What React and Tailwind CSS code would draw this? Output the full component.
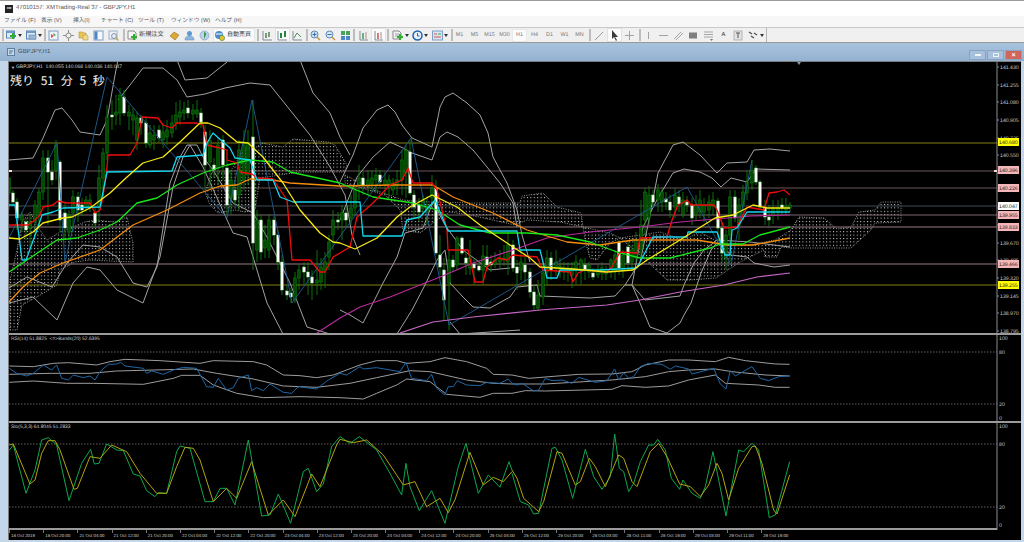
import React from "react";

const SANS = "font-['Liberation_Sans','Noto_Sans_CJK_JP',sans-serif] [text-rendering:geometricPrecision]";

/* ---------- toolbar icons ---------- */
const Svg = ({ w = 11, children, className = "" }) => (
  <svg width={w} height={11} viewBox={`0 0 ${w} 11`} className={"shrink-0 " + className}>{children}</svg>
);
const Plus = ({ x = 6, y = 6 }) => (
  <path d={`M${x} ${y - 3}h2v2h2v2h-2v2h-2v-2h-2v-2h2z`} transform={`translate(-1 0)`} fill="#2fae2f" />
);
const Arrow = () => <svg width="4" height="3" viewBox="0 0 4 3" className="shrink-0"><path d="M0 0h4L2 3z" fill="#333" /></svg>;
const NewChart = () => <Svg><rect x="0.5" y="1" width="8" height="7" fill="#dfeaf6" stroke="#5b86b4" /><rect x="1" y="1" width="7" height="2" fill="#6f9bc9" /><Plus x={7} y={6} /></Svg>;
const Profile = () => <Svg><rect x="0.5" y="1" width="9" height="8" fill="#dfeaf6" stroke="#5b86b4" /><rect x="1" y="1" width="8" height="2" fill="#6f9bc9" /><rect x="3" y="5" width="7" height="4" fill="#9db8d6" stroke="#5b86b4" strokeWidth="0.6" /></Svg>;
const WinGreen = () => <Svg><rect x="1" y="1" width="9" height="9" fill="#eef3f9" stroke="#7d9fc4" /><path d="M3 4l3 2-3 2z" fill="#d9504a" /><path d="M5 3l3 2-2 1z" fill="#3fa83f" /></Svg>;
const Move = () => <Svg><circle cx="5.5" cy="5.5" r="2.5" fill="none" stroke="#8a8a8a" /><path d="M5.5 0v3M5.5 8v3M0 5.5h3M8 5.5h3" stroke="#8a8a8a" /></Svg>;
const Folder = () => <Svg><path d="M1 2h4l1 1h2v5H1z" fill="#e8c45a" stroke="#b9973a" strokeWidth="0.6" /><path d="M5 5h4l1 1v4H5z" fill="#f2d98a" stroke="#b9973a" strokeWidth="0.6" /></Svg>;
const Win = () => <Svg><rect x="1" y="1" width="9" height="9" fill="#f5f8fc" stroke="#7d9fc4" /><rect x="1.5" y="1.5" width="3" height="8" fill="#4f86c0" /></Svg>;
const Search = () => <Svg><rect x="1" y="1" width="8" height="8" fill="#eef2f7" stroke="#9ab0c8" /><circle cx="6" cy="6" r="2.4" fill="none" stroke="#7f8fa0" /><path d="M8 8l2.5 2.5" stroke="#c8a43c" strokeWidth="1.2" /></Svg>;
const Order = () => <Svg><path d="M1 1h6l2 2v6H1z" fill="#f7f7f7" stroke="#8a8a8a" /><Plus x={7} y={7} /></Svg>;
const Diamond = () => <Svg><path d="M1 6l4-4 5 3-4 5z" fill="#d9a93a" stroke="#9c7420" strokeWidth="0.6" /></Svg>;
const Person = () => <Svg><circle cx="5.5" cy="3.5" r="2.5" fill="#5d9ad6" /><path d="M1 10q0-4 4.5-4T10 10z" fill="#8db7e0" stroke="#5c86b0" strokeWidth="0.5" /></Svg>;
const Globe = () => <Svg><circle cx="5.5" cy="5.5" r="4.5" fill="#b9d3ea" stroke="#7f9ab5" strokeWidth="0.6" /><path d="M5 2q3 1 2 3t-2 4" fill="#3f9a55" /></Svg>;
const Auto = () => <Svg><circle cx="5" cy="5" r="4" fill="#4b8fc9" /><path d="M2 4h6" stroke="#fff" /><circle cx="8" cy="8" r="2.6" fill="#e8c22e" stroke="#3e8a3e" strokeWidth="0.6" /></Svg>;
const Bars = ({ c = "#3f6f3f" }) => <Svg><path d="M1 1v9h9" fill="none" stroke="#7d8a99" /><path d="M4 3v5M7 2v5" stroke={c} strokeWidth="1.3" /></Svg>;
const Candle = () => <Svg><path d="M1 1v9h9" fill="none" stroke="#7d8a99" /><rect x="3" y="3" width="2" height="5" fill="#1f8a3c" /><rect x="7" y="1" width="2" height="6" fill="#1f8a3c" /></Svg>;
const LineCh = () => <Svg><path d="M1 1v9h9" fill="none" stroke="#7d8a99" /><path d="M2 8l3-5 4 4" fill="none" stroke="#4f8a6a" /></Svg>;
const ZoomI = ({ plus }) => <Svg><circle cx="4.5" cy="4.5" r="3.5" fill="#d6e6f6" stroke="#5b86b4" /><path d="M7 7l3 3" stroke="#c49a30" strokeWidth="1.5" /><path d={plus ? "M2.5 4.5h4M4.5 2.5v4" : "M2.5 4.5h4"} stroke="#3d6fa3" /></Svg>;
const Grid4 = () => <Svg w={10}><path d="M0 1h4v4H0zM5 1h4v4H5z" fill="#45a35a" /><path d="M0 6h4v4H0zM5 6h4v4H5z" fill="#4b86c6" /></Svg>;
const Shift = ({ c }) => <Svg><path d="M2 1v9h8" fill="none" stroke="#7d8a99" /><path d="M5 3v6" stroke={c} strokeWidth="1.5" /><path d="M8 2v7" stroke="#b08a8a" /></Svg>;
const Indic = () => <Svg w={12}><path d="M1 1h6l2 2v6H1z" fill="#f2f2f2" stroke="#8a8a8a" /><path d="M3 4h4M3 6h4" stroke="#9aa" /><Plus x={8} y={7} /></Svg>;
const Clock = () => <Svg><circle cx="5.5" cy="5.5" r="4.5" fill="#e8f0f9" stroke="#1f62ad" strokeWidth="1.5" /><path d="M5.5 3v3h2" stroke="#1f62ad" fill="none" /></Svg>;
const Tpl = () => <Svg><rect x="0.5" y="1" width="10" height="9" fill="#d7e4f3" stroke="#7d9fc4" /><path d="M2 4h3M2 7h7" stroke="#cf5a4f" /><path d="M6 4h3" stroke="#45a35a" /></Svg>;
const Gray = ({ d, sw = 1 }) => <Svg><path d={d} fill="none" stroke="#a2a2a2" strokeWidth={sw} /></Svg>;
const Cursor = () => <Svg><path d="M3 0v9l2-2 2 4 1-1-2-3h3z" fill="#3a3a3a" /></Svg>;
const Rect = () => <Svg><rect x="1" y="2.5" width="8" height="6" fill="#7f7f7f" /></Svg>;
const Fibo = () => <Svg><path d="M1 2h9M1 4.5h9M1 7h9" stroke="#a5a5a5" /><path d="M7 9h3l-1.500 2z" fill="#777" /></Svg>;
const TextLbl = () => <Svg><rect x="1" y="1" width="8" height="9" fill="#e2e2e2" stroke="#b5b5b5" /><path d="M3 3h4M5 3v5" stroke="#555" /></Svg>;
const Tools = () => <Svg><path d="M1 2l3 2M3 6l3 2M6 3l3 2" stroke="#555" strokeWidth="1.5" /></Svg>;
const Pen = () => <Svg><path d="M1 10L9 2" stroke="#9a9a9a" /></Svg>;
const Sep = ({ ml = 0, mr = 0 }) => <div style={{ marginLeft: ml, marginRight: mr }} className="w-[2px] h-[12px] bg-[#bdbdbd] shrink-0" />;
const Btn = ({ children, active, w = 15 }) => (
  <div style={{ width: w }} className={"h-[14px] flex items-center justify-center gap-[1px] shrink-0 " + (active ? "bg-[#fbfbfb] border border-[#e2e2e2]" : "")}>{children}</div>
);

const Toolbar = () => (
  <div className={"h-[15px] bg-[#f0f0f0] flex items-center pl-[2px] border-b border-[#9a9a9a] " + SANS}>
    <Sep />
    <Btn w={20}><NewChart /><Arrow /></Btn>
    <Btn w={20}><Profile /><Arrow /></Btn>
    <Sep />
    <Btn><WinGreen /></Btn><Btn><Move /></Btn><Btn><Folder /></Btn><Btn><Win /></Btn><Btn><Search /></Btn>
    <Sep ml={2} mr={1} />
    <div className="w-[41px] pl-[1px] flex items-center gap-[1px] text-[6.2px] text-[#444] whitespace-nowrap shrink-0"><Order /><span>新規注文</span></div>
    <Btn><Diamond /></Btn><Btn><Person /></Btn><Btn><Globe /></Btn>
    <div className="w-[42px] h-[14px] ml-[1px] bg-[#fbfbfb] border border-[#e6e6e6] flex items-center gap-[2px] text-[6px] text-[#333] whitespace-nowrap shrink-0"><Auto /><span>自動売買</span></div>
    <Sep ml={2} mr={1} />
    <Btn><Bars /></Btn><Btn active><Candle /></Btn><Btn><LineCh /></Btn>
    <Sep ml={1} />
    <Btn><ZoomI plus /></Btn><Btn><ZoomI /></Btn><Btn><Grid4 /></Btn>
    <Sep mr={1} />
    <Btn><Shift c="#3f9a55" /></Btn><Btn active><Shift c="#c0504d" /></Btn>
    <Sep ml={1} mr={1} />
    <Btn w={20}><Indic /><Arrow /></Btn>
    <Btn w={20}><Clock /><Arrow /></Btn>
    <Btn w={20}><Tpl /><Arrow /></Btn>
    <Sep ml={1} />
    <div className="flex text-[5.4px] text-[#777] -ml-[1px] shrink-0">
      {["M1", "M5", "M15", "M30", "H1", "H4", "D1", "W1", "MN"].map((t) => (
        <div key={t} className={"w-[15px] h-[13px] flex items-center justify-center " + (t === "H1" ? "bg-[#fbfbfb] border border-[#e8e8e8]" : "")}>{t}</div>
      ))}
    </div>
    <Sep ml={2} mr={1} />
    <Btn><Pen /></Btn><Btn active><Cursor /></Btn><Btn><Gray d="M5.5 1v9M1 5.500h9" /></Btn>
    <Sep ml={2} />
    <Btn><Gray d="M5.500 2v7" /></Btn><Btn><Gray d="M1 5.500h9" /></Btn><Btn><Gray d="M1 9L8 2M3 10l7-7" /></Btn>
    <Btn><Rect /></Btn><Btn><Fibo /></Btn>
    <Btn><span className="text-[6px] text-[#666] font-bold">A</span></Btn>
    <Btn><TextLbl /></Btn>
    <Btn w={20}><Tools /><Arrow /></Btn>
    <div className="w-[1px] h-[14px] bg-[#b5b5b5]" />
  </div>
);

/* ---------- chart data (screen coordinates) ---------- */
const WHITE_LINES = [
  "9,160 33,158 43,138 55,110 62,108 72,120 80,132 100,135 107,120 115,75 118,60",
  "118,100 130,85 143,68 163,68 177,80 187,97 205,94 225,88 250,83 270,85 290,110 310,135 330,167 345,195 352,235 360,255",
  "177,60 185,80 207,78 227,62",
  "300,60 313,93 330,113 340,137 350,155",
  "340,182 353,155 363,128 377,110 388,105 395,112 402,125 412,138 432,147 440,107 445,97 453,93 467,103 480,115 488,133 493,157 507,183 517,210 522,235 530,262",
  "340,220 357,177 373,157 390,142 403,148 412,153 432,160 440,137 447,132 458,137 473,150 487,167 500,183 513,203 517,227",
  "9,288 27,277 52,287 67,263 83,245 100,247 117,257 133,283 147,287 157,267 170,183 180,157 187,145 197,145 203,157 213,170 233,203 253,213 267,237 290,283 307,327 330,334",
  "9,303 33,297 57,320 73,283 87,267 100,270 117,290 143,303 160,257 173,187 183,157 190,145 203,167 233,233 247,237 257,270 267,303 283,334",
  "340,310 350,315 363,323 373,303 383,283 397,257 405,233 423,228 433,202 445,225 463,250 490,270 510,268",
  "397,334 412,310 425,285 437,260 445,250 450,283 463,297 473,307 490,308 510,297 517,287 537,285 540,296 590,298 615,296 625,285 632,285 645,300 680,296 684,285 694,263 704,250 717,240 750,242 790,247",
  "450,322 460,334 520,330",
  "625,285 640,262 648,225 658,173 673,145 683,142 700,155 717,173 727,163 747,162 754,150 770,149 790,151",
  "632,285 643,227 658,198 673,173 684,169 700,172 712,178 721,187 731,178 747,182 756,169 790,170",
  "632,285 640,303 650,327 667,333 680,323 684,315 691,303 701,273 711,250 717,243 731,255 747,257 754,263 774,267 790,265",
];
const ZIGZAG = "9,238 57,143 65,263 107,77 227,218 252,100 292,303 411,138 449,325 687,187 731,265 752,160";
const RED = "9,225 28,225 35,220 40,215 43,207 53,205 58,201 67,203 90,203 95,213 100,210 103,197 107,167 108,155 130,155 137,143 142,117 158,118 163,125 172,128 177,123 197,123 203,125 207,145 220,148 227,150 227,160 237,163 240,172 252,174 257,178 273,179 287,200 292,260 310,260 320,272 325,272 333,257 340,253 350,247 357,217 373,203 390,185 402,180 408,168 413,183 432,183 437,190 447,230 448,250 468,250 475,282 483,282 487,267 498,258 507,260 513,255 537,257 543,270 570,272 573,282 578,273 585,270 607,272 612,267 620,252 637,253 640,238 667,237 672,220 678,205 684,202 687,200 691,205 714,205 717,210 724,228 737,227 747,207 764,210 769,193 777,192 784,190 790,195";
const CYAN = "9,205 15,205 22,260 26,260 37,230 42,215 53,212 63,208 100,207 107,172 172,171 177,157 203,155 207,143 213,133 223,142 230,148 235,158 250,160 257,180 273,180 280,197 293,202 360,202 363,236 402,236 407,220 420,217 435,200 448,231 517,231 520,250 540,250 547,278 557,278 560,270 600,270 637,268 653,237 687,237 688,232 717,232 725,255 730,255 732,230 737,228 747,212 790,212";
const YELLOW = "9,238 20,239 33,232 43,223 63,218 72,217 90,208 110,193 127,177 143,163 163,157 180,142 200,123 208,123 220,128 237,142 248,143 263,157 283,183 300,210 320,233 333,242 340,243 355,249 377,238 397,217 410,207 432,195 457,207 480,225 507,243 530,258 540,267 573,269 607,272 633,270 647,260 680,240 715,218 733,215 753,205 767,208 790,208";
const GREEN = "9,272 27,260 57,240 77,238 100,230 117,222 137,203 157,198 177,185 203,173 227,165 250,160 273,162 290,172 313,177 340,183 373,197 413,203 437,210 460,225 490,233 527,233 557,235 590,242 617,252 640,258 670,258 710,248 720,244 743,244 760,235 790,227";
const ORANGE = "9,302 23,287 40,273 63,263 100,250 133,225 167,210 200,193 220,186 237,185 250,179 273,180 290,183 340,186 393,185 433,185 453,197 493,213 527,230 567,242 600,245 633,240 680,240 697,240 727,245 753,245 790,238";
const MAG1 = "317,333 340,318 360,307 390,297 440,277 473,263 513,250 547,238 590,232 640,227 680,222 751,216 790,215";
const MAG2 = "400,333 433,322 473,317 540,310 607,305 640,300 680,292 724,285 757,277 790,273";
const CLOUDS = [
  "10,330 17,330 22,305 37,297 57,285 60,270 75,262 90,260 133,262 133,243 127,217 115,222 95,220 85,222 60,232 47,240 40,230 30,212 22,222 17,250 10,280",
  "210,205 218,213 235,210 245,212 255,210 260,178 300,172 345,172 347,165 335,145 328,142 293,139 283,147 262,143 255,148 245,148 230,172 212,172 205,192",
  "345,175 375,190 403,200 430,202 473,203 520,203 522,196 543,193 557,207 581,213 585,240 590,258 597,260 610,243 620,238 610,233 560,222 527,220 515,225 470,215 450,212 437,220 420,233 403,230 400,210 385,195 345,183",
  "620,238 640,235 660,232 684,240 700,232 724,245 750,245 775,240 791,230 799,217 824,218 837,229 851,227 859,212 875,210 881,202 901,202 901,222 875,223 871,230 851,248 791,248 781,247 777,257 765,257 764,250 740,262 716,278 690,280 667,280 653,267 640,255",
];
/* x, bodyTop, bodyBottom, wickTop, wickBottom, white */
const CANDLES = [
  [9,178,193,178,210,0],[13,193,202,190,205,1],[17,202,218,198,230,1],[22,216,220,212,232,0],[26,222,230,218,240,1],[30,222,228,214,248,0],[35,205,222,200,235,0],[39,192,213,188,225,0],[43,158,192,150,200,0],[48,158,172,150,225,1],[52,172,180,160,185,1],[56,145,170,140,180,0],[60,162,220,160,232,1],[65,213,228,203,238,1],[69,215,232,210,240,0],[73,197,213,190,232,0],[78,197,210,192,222,1],[82,205,210,198,216,1],[86,200,206,196,212,0],[90,200,207,194,212,0],[95,213,223,208,228,1],[99,178,207,165,222,0],[103,153,178,148,190,0],[107,117,153,105,160,0],[112,115,117,100,130,1],[116,112,115,95,125,0],[120,95,113,88,125,0],[124,97,113,90,116,1],[129,112,116,105,130,0],[133,115,120,108,135,0],[137,118,140,112,150,0],[141,118,123,115,135,1],[146,123,143,118,148,1],[150,133,145,125,148,0],[154,135,140,125,150,0],[159,130,138,125,142,1],[163,132,140,125,148,0],[167,130,137,120,145,0],[172,123,133,115,138,0],[176,115,123,102,130,0],[180,112,117,100,125,0],[184,110,113,102,120,0],[188,108,113,100,118,1],[193,110,114,104,120,0],[197,110,114,100,118,0],[201,113,122,108,128,1],[205,132,165,125,190,1],[210,140,162,130,190,0],[214,165,170,158,178,1],[218,145,168,138,185,0],[223,140,165,135,180,1],[227,168,205,160,215,1],[231,180,198,170,215,0],[235,190,200,180,205,1],[239,150,195,140,210,0],[244,145,180,130,190,0],[248,143,175,130,185,0],[253,137,243,100,270,1],[257,220,250,210,262,0],[261,220,252,214,260,1],[265,240,248,225,258,0],[269,220,250,214,258,0],[274,220,235,216,245,1],[278,235,262,230,270,1],[282,262,290,255,295,1],[287,291,295,285,300,1],[291,293,297,288,303,1],[295,278,300,272,303,0],[299,270,278,264,290,0],[304,267,272,262,285,1],[308,272,277,262,295,1],[312,277,283,270,300,1],[317,280,283,250,295,0],[321,267,282,258,290,0],[325,262,270,252,288,0],[329,242,257,235,270,0],[333,220,235,210,250,0],[338,220,222,212,230,1],[342,213,220,205,240,0],[346,213,220,205,228,1],[351,208,218,195,225,0],[355,190,208,185,215,0],[359,178,185,165,200,0],[363,178,185,172,195,1],[368,180,186,170,195,0],[372,178,184,170,192,0],[376,175,180,168,192,0],[380,175,182,170,188,1],[385,180,185,172,195,0],[389,180,187,175,198,0],[393,183,190,178,195,0],[397,180,186,170,195,0],[402,160,180,150,195,0],[406,150,173,145,198,0],[410,152,193,140,195,1],[414,195,207,190,218,1],[419,205,212,198,222,1],[423,200,208,195,215,0],[427,205,212,196,225,0],[432,188,198,175,205,0],[436,188,253,180,255,1],[440,255,267,235,275,1],[444,270,300,258,320,1],[449,260,283,250,330,0],[453,260,267,255,272,1],[457,238,265,236,270,0],[462,238,253,236,255,1],[466,258,263,252,275,1],[470,258,268,240,275,0],[474,264,268,258,285,1],[479,266,270,260,272,1],[483,256,270,245,285,0],[487,257,265,245,270,1],[491,262,265,255,272,1],[495,260,264,252,268,0],[500,258,262,250,268,0],[504,258,260,245,266,0],[508,245,262,232,275,0],[513,245,268,240,272,1],[517,267,273,260,290,1],[521,262,270,250,280,0],[525,265,272,255,285,1],[530,272,292,268,298,1],[534,292,305,285,310,1],[538,295,308,280,311,0],[543,273,297,262,305,0],[547,258,272,250,285,0],[551,258,270,252,280,1],[556,262,268,250,276,0],[560,266,272,258,278,0],[564,268,272,262,280,0],[568,268,272,262,282,0],[572,268,275,262,288,0],[576,262,270,255,284,0],[581,260,270,258,285,0],[585,265,270,258,280,1],[589,265,272,262,278,0],[593,273,277,268,280,1],[598,270,275,265,278,0],[602,268,273,262,280,0],[606,270,274,266,280,0],[611,260,272,258,278,0],[615,255,272,250,280,0],[619,242,268,240,275,1],[623,255,270,250,278,0],[628,247,263,240,270,1],[632,250,262,245,270,0],[636,240,258,232,262,0],[641,225,250,200,258,0],[645,192,220,188,235,0],[649,195,218,186,225,0],[653,195,202,190,208,1],[658,190,200,184,212,0],[662,192,202,187,212,0],[666,199,202,192,210,1],[670,202,210,195,218,1],[675,195,207,188,218,0],[679,197,204,190,212,1],[683,200,215,192,218,0],[687,202,205,196,212,1],[692,205,218,198,225,1],[696,205,215,195,220,0],[700,200,212,190,218,0],[704,205,212,198,222,0],[709,202,210,195,218,0],[713,200,205,192,215,0],[718,201,228,198,245,1],[722,228,253,222,262,1],[726,235,258,230,270,0],[730,197,235,190,262,0],[735,197,218,190,222,1],[739,205,225,198,240,0],[743,192,205,185,220,0],[747,182,193,170,200,0],[752,170,183,160,190,0],[756,168,182,165,185,1],[760,182,207,180,210,1],[765,207,217,200,225,1],[769,217,220,205,226,1],[773,208,215,200,224,0],[778,208,212,200,220,0],[782,205,208,198,216,1],[786,206,210,198,214,0],[790,205,208,202,212,0],
];
const HLINES = [[143,"#808010"],[171,"#6a5558"],[188,"#6a5558"],[206,"#3f4a52"],[215,"#7c666c"],[227,"#957c80"],[264,"#957c80"],[285,"#808010"]];
const PRICES = [["141.430",67],["141.255",85],["141.080",102],["140.905",120],["140.725",138],["140.550",155],["",173],["",191],["140.025",208],["139.845",225],["139.670",243],["139.495",260],["139.320",278],["139.145",296],["138.970",313],["138.795",331]];
const BOXES = [["140.680",142,"#ffff00"],["140.396",170,"#f4b6b8"],["140.226",188,"#f4b6b8"],["140.047",206,"#ffffff"],["139.955",215,"#f4b6b8"],["139.833",227,"#f4b6b8"],["139.466",264,"#f4b6b8"],["139.255",285,"#ffff00"]];

const P = ({ pts, c, w = 1 }) => <polyline points={pts} fill="none" stroke={c} strokeWidth={w} strokeLinejoin="round" />;
const FONT = "'Liberation Sans',sans-serif";

const MainPane = () => (
  <div className="relative h-[273px] border-b-2 border-[#9a9a9a]">
    <svg width="1012" height="271" viewBox="9 62 1012 271" className="block">
      <defs>
        <pattern id="dots" patternUnits="userSpaceOnUse" width="3.4" height="3.4">
          <rect width="1" height="1" fill="#dcdcdc" />
        </pattern>
        <clipPath id="plot"><rect x="9" y="62" width="988" height="271" /></clipPath>
      </defs>
      <g clipPath="url(#plot)">
        {CLOUDS.map((c, i) => <polygon key={i} points={c} fill="url(#dots)" stroke="#bbb" strokeWidth="0.8" strokeDasharray="1 1.400" />)}
        {HLINES.map(([y, c]) => <line key={y} x1="9" x2="997" y1={y} y2={y} stroke={c} strokeWidth="1.200" />)}
        {WHITE_LINES.map((l, i) => <P key={i} pts={l} c="#a2a2a2" w={1} />)}
        {CANDLES.map(([x, t, b, wt, wb, white], i) => (
          <g key={i}>
            <line x1={x} x2={x} y1={wt} y2={wb} stroke="#0b7d0b" strokeWidth="0.9" />
            <rect x={x - 1.300} y={t} width="2.600" height={Math.max(b - t, 1)} fill={white ? "#ffffff" : "#044a04"} stroke={white ? "#7fcf7f" : "#0d8a0d"} strokeWidth="0.5" />
          </g>
        ))}
        <P pts={ZIGZAG} c="#1f5f93" w={0.9} />
        <P pts={MAG1} c="#b92a9c" w={1.200} />
        <P pts={MAG2} c="#c869c8" w={1.200} />
        <P pts={ORANGE} c="#f48c0c" w={1.300} />
        <P pts={GREEN} c="#18e818" w={1.300} />
        <P pts={RED} c="#f00c0c" w={1.300} />
        <P pts={CYAN} c="#14d6ee" w={1.300} />
        <P pts={YELLOW} c="#f8ea12" w={1.300} />
      </g>
      <rect x="9" y="170" width="3" height="2" fill="#f6dede" />
      <path d="M797 62h4l-2 3z" fill="#7f97a8" />
      <line x1="997" x2="997" y1="62" y2="333" stroke="#8c8c8c" />
      <g fontFamily={FONT} fontSize="5.2" fill="#c9c9c9" textRendering="geometricPrecision">
        {PRICES.map(([t, y]) => (
          <g key={y}>
            <line x1="997" x2="999" y1={y} y2={y} stroke="#8c8c8c" />
            {t && <text x="1000" y={y + 1.800}>{t}</text>}
          </g>
        ))}
      </g>
      <rect x="994" y="170" width="3" height="2" fill="#f6dede" />
      <g fontFamily={FONT} fontSize="5.2" fill="#222" textRendering="geometricPrecision">
        {BOXES.map(([t, y, c]) => (
          <g key={t}>
            <rect x="998" y={y - 4} width="21" height="8" fill={c} />
            <text x="999" y={y + 1.800}>{t}</text>
          </g>
        ))}
      </g>
    </svg>
    <div className={"absolute left-[2px] top-[2px] flex items-center gap-[1px] text-[5px] text-[#d0d0d0] whitespace-nowrap " + SANS}>
      <span className="text-[4px]">▼</span><span>GBPJPY,H1&nbsp; 140.055 140.068 140.036 140.047</span>
    </div>
    <div className="absolute left-[1px] top-[11px] text-[12px] leading-[16px] text-[#f2f2f2] whitespace-nowrap font-['Noto_Sans_CJK_JP',sans-serif] [word-spacing:4px]">残り 51 分 5 秒</div>
  </div>
);

const gz7 = "translate(0 330) scale(0.3333)";
const gz8 = "translate(512 330) scale(0.3333)";
const RSI = {
  upper: ["28,108 100,110 160,100 205,98 290,105 330,95 375,88 480,92 600,100 640,92 760,95 800,105 850,135 900,137 950,143 1000,135 1080,105 1130,92 1190,92 1220,100 1290,95 1335,83 1400,95 1460,115 1480,133 1536,135", "0,135 50,145 200,133 300,132 360,125 400,105 470,90 530,90 610,95 650,82 700,92 790,102 833,103"],
  mid: ["28,133 150,130 270,130 350,123 580,117 650,130 760,147 850,168 950,172 1050,160 1130,143 1230,122 1290,125 1400,150 1480,160 1536,162", "0,162 100,162 300,150 400,140 470,125 530,120 610,117 660,125 760,135 833,138"],
  lower: ["28,157 100,153 200,160 280,160 430,163 520,145 545,136 600,136 640,165 710,190 790,203 900,200 1020,203 1090,207 1130,190 1190,165 1220,147 1290,155 1340,193 1440,202 1480,190 1536,190", "0,190 40,182 100,183 300,178 330,167 400,172 470,168 530,150 610,135 640,160 740,165 790,172 833,172"],
  blue: ["28,115 50,130 80,138 100,130 130,105 155,120 170,105 185,145 205,150 220,135 250,143 270,138 285,150 300,125 325,103 350,102 362,97 375,108 430,115 440,130 455,123 490,133 520,120 550,112 590,115 620,170 640,172 655,145 680,180 700,173 715,145 745,135 755,182 770,173 790,182 810,162 850,187 875,190 895,170 950,177 985,150 1020,130 1040,135 1080,110 1090,117 1130,113 1200,125 1218,97 1235,145 1280,152 1295,133 1310,175 1335,195 1345,170 1360,170 1372,152 1400,165 1440,167 1460,157 1500,160 1525,147 1536,160", "0,160 15,165 30,160 65,183 80,180 100,145 120,152 150,150 180,160 200,142 250,157 285,152 308,117 320,150 335,128 350,145 365,140 385,110 410,100 450,103 475,118 490,108 530,117 540,132 605,115 625,162 642,177 655,122 670,138 720,110 745,145 770,152 800,140 833,138"],
};
const STO = {
  g: ["28,360 40,345 78,490 105,420 125,330 145,323 170,345 207,512 245,400 272,358 283,402 297,400 320,342 350,360 370,362 400,432 420,438 440,482 465,500 475,488 500,490 530,365 540,348 570,355 615,515 640,515 660,475 680,475 705,525 745,330 785,558 810,555 835,492 872,580 910,425 925,415 950,485 970,462 995,350 1020,320 1050,340 1078,320 1130,360 1170,430 1205,495 1218,400 1230,470 1258,542 1295,482 1335,580 1375,410 1398,340 1435,490 1465,435 1500,472 1527,395 1536,420", "0,430 25,515 50,525 65,552 80,550 120,355 130,352 150,390 182,505 220,358 245,440 270,478 295,440 308,312 322,415 335,425 350,485 365,460 385,395 410,345 425,345 437,328 460,360 478,445 503,478 513,450 540,490 565,505 580,470 603,365 642,558 680,360 695,365 720,340 740,360 772,563 790,555 833,395"],
  y: ["28,345 40,342 60,390 90,462 105,450 125,370 145,332 165,332 180,360 222,478 232,475 270,380 300,385 335,345 380,365 420,430 470,490 500,490 530,410 555,352 580,355 600,390 640,515 680,475 710,505 755,395 775,460 805,555 850,510 885,560 935,432 960,470 1010,345 1020,328 1060,338 1100,330 1150,375 1210,465 1245,455 1280,530 1320,505 1345,548 1365,510 1410,367 1450,465 1480,442 1510,455 1536,425", "0,420 15,445 35,505 80,545 95,515 135,365 150,370 190,465 205,455 232,385 250,410 280,470 320,375 335,385 360,455 375,470 415,365 440,340 465,380 503,462 535,470 565,500 590,465 615,400 630,430 650,510 680,415 720,350 730,348 750,400 785,540 795,552 833,435"],
};
const Two = ({ d, c, w }) => (
  <>
    <g transform={gz7}><P pts={d[0]} c={c} w={w} /></g>
    <g transform={gz8}><P pts={d[1]} c={c} w={w} /></g>
  </>
);
const AxisText = ({ items }) => (
  <g fontFamily={FONT} fontSize="5.2" fill="#c9c9c9" textRendering="geometricPrecision">
    {items.map(([t, y]) => <text key={t} x="999" y={y + 1.800}>{t}</text>)}
  </g>
);
const RsiPane = () => (
  <div className="relative h-[88px] border-b-2 border-[#9a9a9a]">
    <svg width="1012" height="86" viewBox="9 335 1012 86" className="block">
      <line x1="9" x2="997" y1="352" y2="352" stroke="#8a8a8a" strokeWidth="0.7" strokeDasharray="1.500 1.500" />
      <line x1="9" x2="997" y1="404" y2="404" stroke="#8a8a8a" strokeWidth="0.7" strokeDasharray="1.500 1.500" />
      <Two d={RSI.upper} c="#a8a8a8" w={2.800} />
      <Two d={RSI.mid} c="#a8a8a8" w={2.800} />
      <Two d={RSI.lower} c="#a8a8a8" w={2.800} />
      <Two d={RSI.blue} c="#1f67a8" w={3} />
      <line x1="997" x2="997" y1="334" y2="421" stroke="#8c8c8c" />
      <AxisText items={[["100", 338], ["80", 352], ["20", 404], ["0", 418]]} />
    </svg>
    <div className={"absolute left-[2px] top-[1px] text-[4.9px] text-[#c8c8c8] whitespace-nowrap " + SANS}>RSI(14) 51.8825&nbsp; &lt;=&gt;Bands(20) 52.6395</div>
  </div>
);
const StoPane = () => (
  <div className="relative h-[107px] border-b-2 border-[#9a9a9a] mr-[24px]">
    <svg width="1012" height="105" viewBox="9 423 1012 105" className="block overflow-visible">
      <line x1="9" x2="997" y1="444" y2="444" stroke="#8a8a8a" strokeWidth="0.7" strokeDasharray="1.500 1.500" />
      <line x1="9" x2="997" y1="507" y2="507" stroke="#8a8a8a" strokeWidth="0.7" strokeDasharray="1.500 1.500" />
      <Two d={STO.g} c="#0ea84e" w={3} />
      <Two d={STO.y} c="#b3a50f" w={3} />
      <line x1="997" x2="997" y1="423" y2="530" stroke="#8c8c8c" />
      <AxisText items={[["100", 426], ["80", 444], ["20", 507], ["0", 525]]} />
    </svg>
    <div className={"absolute left-[2px] top-[1px] text-[4.9px] text-[#c8c8c8] whitespace-nowrap " + SANS}>Sto(5,3,3) 64.8045 51.2833</div>
  </div>
);
const TIMES = ["18 Oct 2019","18 Oct 20:00","21 Oct 04:00","21 Oct 12:00","21 Oct 20:00","22 Oct 04:00","22 Oct 12:00","22 Oct 20:00","23 Oct 04:00","23 Oct 12:00","23 Oct 20:00","24 Oct 04:00","24 Oct 12:00","24 Oct 20:00","25 Oct 04:00","25 Oct 12:00","25 Oct 20:00","28 Oct 03:00","28 Oct 11:00","28 Oct 19:00","29 Oct 03:00","29 Oct 11:00","29 Oct 19:00"];
const TimeAxis = () => (
  <div className={"h-[10px] flex text-[4.4px] text-[#d0d0d0] " + SANS}>
    {TIMES.map((t) => (
      <div key={t} className="w-[34.2px] h-[3px] shrink-0 whitespace-nowrap border-l border-[#777] pl-[1px] leading-[11px]">{t}</div>
    ))}
  </div>
);

const WinBtn = ({ children, className }) => (
  <div className={"w-[17px] h-[10px] flex items-center justify-center border border-[#88a4c2] " + className}>{children}</div>
);

export default function App() {
  return (
    <div className={"w-[1024px] h-[542px] overflow-hidden flex flex-col bg-white " + SANS}>
      <div className="h-[16px] bg-white border-t border-[#9a9a9a] flex items-center pl-[5px] gap-[3px] text-[6px] text-[#555]">
        <div className="w-[8px] h-[8px] bg-[#222] text-white text-[3px] flex items-center justify-center font-bold">XM</div>
        <span>47010157: XMTrading-Real 37 - GBPJPY,H1</span>
      </div>
      <div className="h-[12px] bg-[#f7f7f7] border-b border-[#c9c9c9] flex items-center pl-[4px] text-[5.7px] text-[#555] whitespace-nowrap">
        <span className="w-[37px]">ファイル (F)</span>
        <span className="w-[32px]">表示 (V)</span>
        <span className="w-[28px]">挿入(I)</span>
        <span className="w-[37px]">チャート (C)</span>
        <span className="w-[33px]">ツール (T)</span>
        <span className="w-[44px]">ウィンドウ (W)</span>
        <span>ヘルプ (H)</span>
      </div>
      <Toolbar />
      <div className="flex-1 min-h-0 flex flex-col bg-[#c3d6ea] pb-[2px] pl-[1px]">
        <div className="h-[18px] shrink-0 bg-gradient-to-b from-[#a9c3dd] to-[#93b1d1] flex items-center pl-[7px] pr-[2px] gap-[3px] -ml-[1px]">
          <svg width="8" height="8" viewBox="0 0 8 8" className="shrink-0"><rect x="0.5" y="0.500" width="7" height="7" fill="#c6d8ea" stroke="#5e7f9f" /><path d="M2 3h4M2 5h3" stroke="#4f6f8f" /></svg>
          <span className="text-[6px] text-[#3d4a58] flex-1">GBPJPY,H1</span>
          <div className="flex gap-[1px] mb-[1px] self-end">
            <WinBtn className="bg-[#a7c1dc]"><div className="w-[6px] h-[1.500px] bg-[#f2f5f8]" /></WinBtn>
            <WinBtn className="bg-[#a7c1dc]"><div className="w-[6px] h-[4px] border border-[#eef2f6]" /></WinBtn>
            <WinBtn className="bg-[#d0655a]"><span className="text-[7px] leading-none text-white font-bold">×</span></WinBtn>
          </div>
        </div>
        <div className="ml-[7px] mr-[3px] flex-1 min-h-0 bg-black border-l border-t border-[#7d7d7d] overflow-hidden">
          <MainPane />
          <RsiPane />
          <StoPane />
          <TimeAxis />
        </div>
      </div>
    </div>
  );
}
